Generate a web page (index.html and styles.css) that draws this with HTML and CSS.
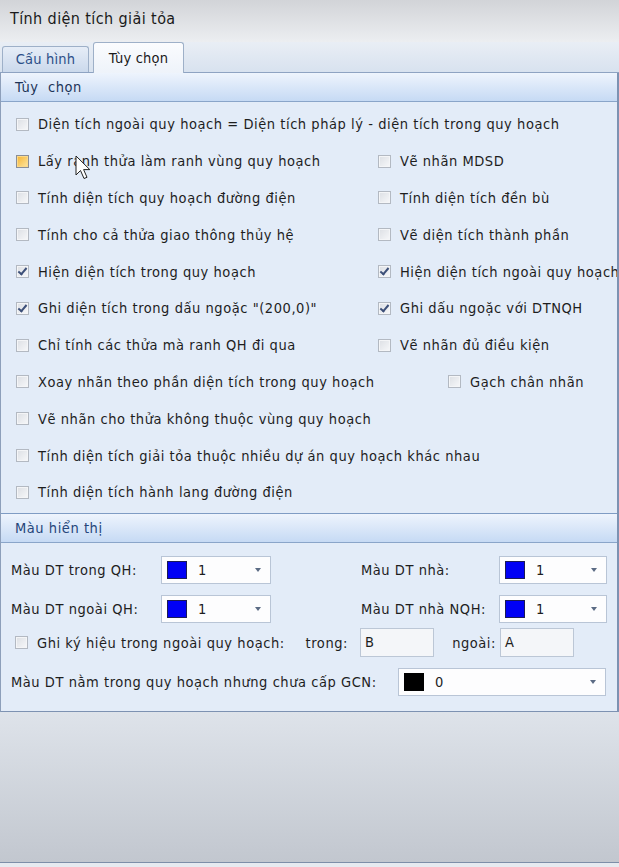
FILE: index.html
```html
<!DOCTYPE html>
<html lang="vi">
<head>
    <meta charset="UTF-8">
    <meta name="viewport" content="width=device-width, initial-scale=1.0">
    <title>Tính diện tích giải tỏa</title>
    <link rel="stylesheet" href="styles.css">
</head>
<body>
    <div class="window">
        <div class="titlebar">Tính diện tích giải tỏa</div>

        <div class="tabstrip">
            <div class="tab">Cấu hình</div>
            <div class="tab active">Tùy chọn</div>
        </div>

        <div class="page">
            <div class="group-head">Tùy&nbsp; chọn</div>
            <div class="group-body options">
                <div class="row">
                    <label class="check"><span class="box"></span>Diện tích ngoài quy hoạch = Diện tích pháp lý - diện tích trong quy hoạch</label>
                </div>
                <div class="row two">
                    <label class="check"><span class="box hot"></span>Lấy ranh thửa làm ranh vùng quy hoạch</label>
                    <label class="check"><span class="box"></span>Vẽ nhãn MDSD</label>
                </div>
                <div class="row two">
                    <label class="check"><span class="box"></span>Tính diện tích quy hoạch đường điện</label>
                    <label class="check"><span class="box"></span>Tính diện tích đền bù</label>
                </div>
                <div class="row two">
                    <label class="check"><span class="box"></span>Tính cho cả thửa giao thông thủy hệ</label>
                    <label class="check"><span class="box"></span>Vẽ diện tích thành phần</label>
                </div>
                <div class="row two">
                    <label class="check"><span class="box checked"></span>Hiện diện tích trong quy hoạch</label>
                    <label class="check"><span class="box checked"></span>Hiện diện tích ngoài quy hoạch</label>
                </div>
                <div class="row two">
                    <label class="check"><span class="box checked"></span>Ghi diện tích trong dấu ngoặc "(200,0)"</label>
                    <label class="check"><span class="box checked"></span>Ghi dấu ngoặc với DTNQH</label>
                </div>
                <div class="row two">
                    <label class="check"><span class="box"></span>Chỉ tính các thửa mà ranh QH đi qua</label>
                    <label class="check"><span class="box"></span>Vẽ nhãn đủ điều kiện</label>
                </div>
                <div class="row two wide">
                    <label class="check"><span class="box"></span>Xoay nhãn theo phần diện tích trong quy hoạch</label>
                    <label class="check"><span class="box"></span>Gạch chân nhãn</label>
                </div>
                <div class="row">
                    <label class="check"><span class="box"></span>Vẽ nhãn cho thửa không thuộc vùng quy hoạch</label>
                </div>
                <div class="row">
                    <label class="check"><span class="box"></span>Tính diện tích giải tỏa thuộc nhiều dự án quy hoạch khác nhau</label>
                </div>
                <div class="row">
                    <label class="check"><span class="box"></span>Tính diện tích hành lang đường điện</label>
                </div>

                <svg class="cursor" width="17" height="26" viewBox="0 0 17 26">
                    <path d="M1 1 L1 20 L5.5 15.5 L9 23.5 L12 22.3 L8.6 14.6 L14.8 14.6 Z" fill="#fff" stroke="#222" stroke-width="1" stroke-linejoin="round"/>
                </svg>
            </div>

            <div class="group-head second">Màu hiển thị</div>
            <div class="group-body colors">
                <div class="color-row">
                    <span class="field-label">Màu DT trong QH:</span>
                    <div class="combo"><span class="swatch"></span><span class="value">1</span><span class="arrow"></span></div>
                    <span></span>
                    <span class="field-label">Màu DT nhà:</span>
                    <div class="combo"><span class="swatch"></span><span class="value">1</span><span class="arrow"></span></div>
                </div>
                <div class="color-row">
                    <span class="field-label">Màu DT ngoài QH:</span>
                    <div class="combo"><span class="swatch"></span><span class="value">1</span><span class="arrow"></span></div>
                    <span></span>
                    <span class="field-label">Màu DT nhà NQH:</span>
                    <div class="combo"><span class="swatch"></span><span class="value">1</span><span class="arrow"></span></div>
                </div>
                <div class="symbol-row">
                    <label class="check"><span class="box"></span>Ghi ký hiệu trong ngoài quy hoạch:</label>
                    <span class="field-label right">trong:</span>
                    <div class="textbox">B</div>
                    <span class="field-label right tight">ngoài:</span>
                    <div class="textbox">A</div>
                </div>
                <div class="gcn-row">
                    <span class="field-label">Màu DT nằm trong quy hoạch nhưng chưa cấp GCN:</span>
                    <div class="combo"><span class="swatch black"></span><span class="value">0</span><span class="arrow"></span></div>
                </div>
            </div>
        </div>

        <div class="footer"></div>
    </div>
</body>
</html>
```

FILE: styles.css
```css
body {
    margin: 0;
    width: 619px;
    height: 867px;
    overflow: hidden;
    background-color: #e6eaf0;
    font-family: "DejaVu Sans Condensed", "Liberation Sans", sans-serif;
    font-size: 14.5px;
    letter-spacing: 0.55px;
    color: #1e1e1e;
}
.window {
    height: 867px;
    display: flex;
    flex-direction: column;
}
.titlebar {
    height: 42px;
    flex: none;
    padding-left: 10px;
    line-height: 38px;
    font-size: 16px;
    letter-spacing: 0.4px;
    color: #1a1a1a;
    background: linear-gradient(#d2d4d8, #eceef1);
}
.tabstrip {
    height: 30px;
    flex: none;
    display: flex;
    align-items: flex-end;
    gap: 4px;
    padding-left: 2px;
    background: linear-gradient(#e9eef5, #d8e2ef);
    border-bottom: 1px solid #8ea3c2;
}
.tab {
    width: 85px;
    height: 25px;
    line-height: 25px;
    text-align: center;
    letter-spacing: 0.2px;
    border: 1px solid #9eb0c8;
    border-bottom: none;
    border-radius: 3px 3px 0 0;
    background: linear-gradient(#e6edf7, #cbd9ec);
    color: #2c4f88;
}
.tab.active {
    width: 89px;
    height: 30px;
    line-height: 30px;
    margin-bottom: -1px;
    background: linear-gradient(#fbfcfe, #eef3fa);
    color: #1a1a1a;
}
.page {
    width: 616px;
    flex: none;
    border-left: 1px solid #8d9fba;
    border-right: 2px solid #7d92b2;
    border-bottom: 1px solid #7d92b2;
    background-color: #e3ecf8;
    overflow: hidden;
}
.group-head {
    height: 28px;
    line-height: 28px;
    padding-left: 14px;
    border-bottom: 1px solid #8aa5c9;
    background: linear-gradient(#eef4fd, #c6daf4);
    color: #1c3458;
}
.group-head.second {
    border-top: 1px solid #7f9cc4;
    color: #26467a;
}
.group-body {
    position: relative;
}
.options {
    height: 407px;
    padding: 4px 0 0 15px;
}
.row {
    height: 36.8px;
    display: flex;
    align-items: center;
}
.row.two .check:first-child {
    width: 362px;
    flex: none;
}
.row.two.wide .check:first-child {
    width: 432px;
}
.check {
    display: flex;
    align-items: center;
    white-space: nowrap;
}
.box {
    width: 11px;
    height: 11px;
    flex: none;
    margin-right: 9px;
    border: 1px solid #b3b9c2;
    background: linear-gradient(135deg, #dcdfe4, #f7f8fa);
    box-shadow: inset 0 0 0 1px #f4f5f7;
    position: relative;
}
.box.hot {
    border-color: #8a8e96;
    background: linear-gradient(135deg, #f6b330, #fde7a4);
    box-shadow: inset 0 0 0 1px #fbd98a;
}
.box.checked::after {
    content: "";
    position: absolute;
    left: 3px;
    top: 0;
    width: 3px;
    height: 7px;
    border: solid #3d5079;
    border-width: 0 2px 2px 0;
    transform: rotate(40deg);
}
.cursor {
    position: absolute;
    left: 74px;
    top: 53px;
}
.colors {
    height: 168px;
    padding: 13px 0 0 10px;
    box-sizing: border-box;
}
.color-row {
    display: grid;
    grid-template-columns: 150px 110px 90px 138px 108px;
    align-items: center;
    height: 28px;
    margin-bottom: 11px;
}
.field-label {
    white-space: nowrap;
}
.field-label.right {
    text-align: right;
    padding-right: 12px;
}
.field-label.right.tight {
    padding-right: 4px;
}
.combo {
    height: 26px;
    display: flex;
    align-items: center;
    border: 1px solid #b9c5d6;
    background-color: #fdfdfe;
    position: relative;
}
.swatch {
    width: 18px;
    height: 16px;
    margin-left: 5px;
    background-color: #0000f5;
    border: 1px solid #1b1b55;
}
.swatch.black {
    background-color: #000;
    border-color: #000;
}
.value {
    margin-left: 11px;
}
.arrow {
    position: absolute;
    right: 9px;
    top: 11px;
    border-left: 3.5px solid transparent;
    border-right: 3.5px solid transparent;
    border-top: 4px solid #5b6b84;
}
.symbol-row {
    display: grid;
    grid-template-columns: 273px 72px 74px 66px 74px;
    align-items: center;
    height: 29px;
    margin-top: -6px;
    margin-left: 4px;
}
.textbox {
    height: 27px;
    line-height: 27px;
    padding-left: 4px;
    border: 1px solid #bcc7d6;
    background-color: #f4f6f9;
}
.gcn-row {
    display: grid;
    grid-template-columns: 387px 208px;
    align-items: center;
    height: 28px;
    margin-top: 11px;
}
.footer {
    height: 150px;
    flex: none;
    border-bottom: 1px solid #7d8ea8;
    background: linear-gradient(#dee3ea, #c2c7cf);
}
```
